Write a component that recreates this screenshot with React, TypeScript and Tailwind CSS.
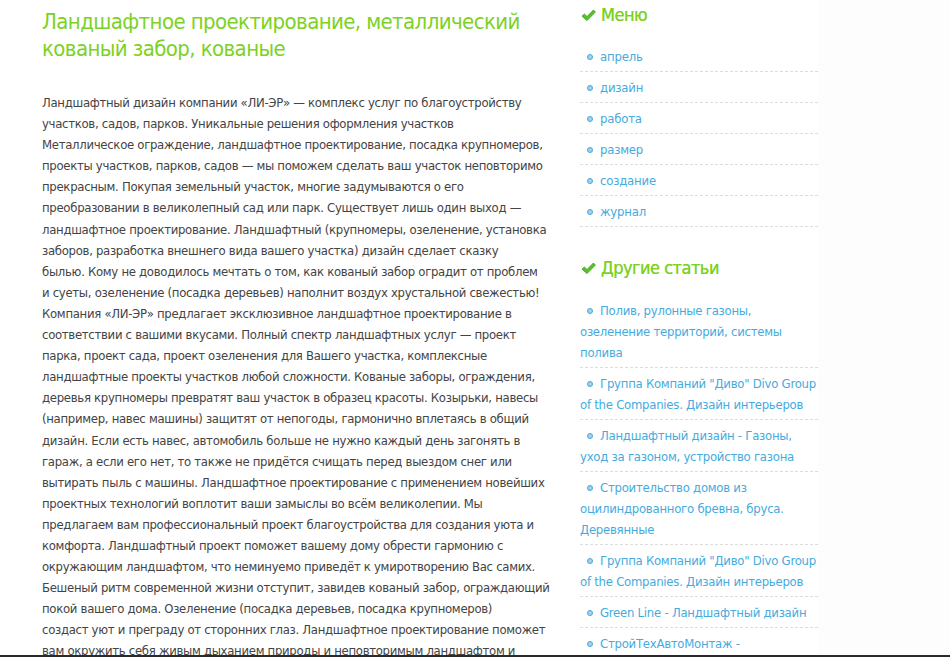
const bodyLines = [
  'Ландшафтный дизайн компании «ЛИ-ЭР» — комплекс услуг по благоустройству',
  'участков, садов, парков. Уникальные решения оформления участков',
  'Металлическое ограждение, ландшафтное проектирование, посадка крупномеров,',
  'проекты участков, парков, садов — мы поможем сделать ваш участок неповторимо',
  'прекрасным. Покупая земельный участок, многие задумываются о его',
  'преобразовании в великолепный сад или парк. Существует лишь один выход —',
  'ландшафтное проектирование. Ландшафтный (крупномеры, озеленение, установка',
  'заборов, разработка внешнего вида вашего участка) дизайн сделает сказку',
  'былью. Кому не доводилось мечтать о том, как кованый забор оградит от проблем',
  'и суеты, озеленение (посадка деревьев) наполнит воздух хрустальной свежестью!',
  'Компания «ЛИ-ЭР» предлагает эксклюзивное ландшафтное проектирование в',
  'соответствии с вашими вкусами. Полный спектр ландшафтных услуг — проект',
  'парка, проект сада, проект озеленения для Вашего участка, комплексные',
  'ландшафтные проекты участков любой сложности. Кованые заборы, ограждения,',
  'деревья крупномеры превратят ваш участок в образец красоты. Козырьки, навесы',
  '(например, навес машины) защитят от непогоды, гармонично вплетаясь в общий',
  'дизайн. Если есть навес, автомобиль больше не нужно каждый день загонять в',
  'гараж, а если его нет, то также не придётся счищать перед выездом снег или',
  'вытирать пыль с машины. Ландшафтное проектирование с применением новейших',
  'проектных технологий воплотит ваши замыслы во всём великолепии. Мы',
  'предлагаем вам профессиональный проект благоустройства для создания уюта и',
  'комфорта. Ландшафтный проект поможет вашему дому обрести гармонию с',
  'окружающим ландшафтом, что неминуемо приведёт к умиротворению Вас самих.',
  'Бешеный ритм современной жизни отступит, завидев кованый забор, ограждающий',
  'покой вашего дома. Озеленение (посадка деревьев, посадка крупномеров)',
  'создаст уют и преграду от сторонних глаз. Ландшафтное проектирование поможет',
  'вам окружить себя живым дыханием природы и неповторимым ландшафтом и',
];

const menu = ['апрель', 'дизайн', 'работа', 'размер', 'создание', 'журнал'];

const articles = [
  ['Полив, рулонные газоны,', 'озеленение территорий, системы', 'полива'],
  ['Группа Компаний "Диво" Divo Group', 'of the Companies. Дизайн интерьеров'],
  ['Ландшафтный дизайн - Газоны,', 'уход за газоном, устройство газона'],
  ['Строительство домов из', 'оцилиндрованного бревна, бруса.', 'Деревянные'],
  ['Группа Компаний "Диво" Divo Group', 'of the Companies. Дизайн интерьеров'],
  ['Green Line - Ландшафтный дизайн'],
  ['СтройТехАвтоМонтаж -'],
];

const font = { fontFamily: '"DejaVu Sans Condensed", Tahoma, "DejaVu Sans", sans-serif' };

const Check = () => (
  <svg width="15" height="13" viewBox="0 0 15 13" className="shrink-0">
    <path d="M1 7.2 L3.4 5 L6 7.6 L12.4 1 L14.4 3 L6 11.6 Z" fill="#59c22a" stroke="#3f9b1c" strokeWidth="0.8" strokeLinejoin="round" />
  </svg>
);

const Bullet = () => (
  <span className="inline-block w-[6px] h-[6px] rounded-full bg-[#9fd3ef] border border-[#4fa6d6] ml-[7px] mr-[7px] align-[1px]" />
);

const SideHeading = ({ children }: { children: string }) => (
  <h3 className="flex items-center gap-[5px] text-[18px] leading-[26px] tracking-[-0.5px] text-[#7cd224] pl-[1px] [text-shadow:0_0_0.4px_#7cd224]">
    <Check />
    <span>{children}</span>
  </h3>
);

export default function App() {
  return (
    <div className="h-[657px] overflow-hidden flex flex-col bg-white" style={font}>
      <div className="flex-1 flex overflow-hidden">
        <main className="w-[580px] shrink-0 pl-[42px] pr-[10px]">
          <h1 className="pt-[8px] text-[22px] leading-[27px] tracking-[-0.6px] text-[#7cd224]">
            Ландшафтное проектирование, металлический
            <br />
            кованый забор, кованые
          </h1>
          <p className="mt-[30px] text-[13px] leading-[21.1px] tracking-[-0.3px] text-[#444] whitespace-nowrap">
            {bodyLines.map((l, i) => (
              <span key={i}>
                {l}
                <br />
              </span>
            ))}
          </p>
        </main>
        <aside className="w-[238px] shrink-0">
          <div className="pt-[2px]">
            <SideHeading>Меню</SideHeading>
          </div>
          <ul className="mt-[13px]">
            {menu.map((m) => (
              <li key={m} className="pt-[5px] pb-[4px] border-b border-dashed border-[#dcdcdc] text-[13px] leading-[21px] tracking-[-0.2px] text-[#45abde]">
                <Bullet />
                {m}
              </li>
            ))}
          </ul>
          <div className="mt-[28px]">
            <SideHeading>Другие статьи</SideHeading>
          </div>
          <ul className="mt-[14px]">
            {articles.map((a, i) => (
              <li key={i} className="pt-[5px] pb-[4px] border-b border-dashed border-[#dcdcdc] text-[13px] leading-[21px] tracking-[-0.25px] text-[#45abde] whitespace-nowrap">
                <Bullet />
                {a.map((l, j) => (
                  <span key={j}>
                    {l}
                    {j < a.length - 1 && <br />}
                  </span>
                ))}
              </li>
            ))}
          </ul>
        </aside>
        <div className="flex-1 bg-[#fdfdfd]" />
      </div>
      <div className="h-[2px] bg-[#2b2b2b] shrink-0" />
    </div>
  );
}
